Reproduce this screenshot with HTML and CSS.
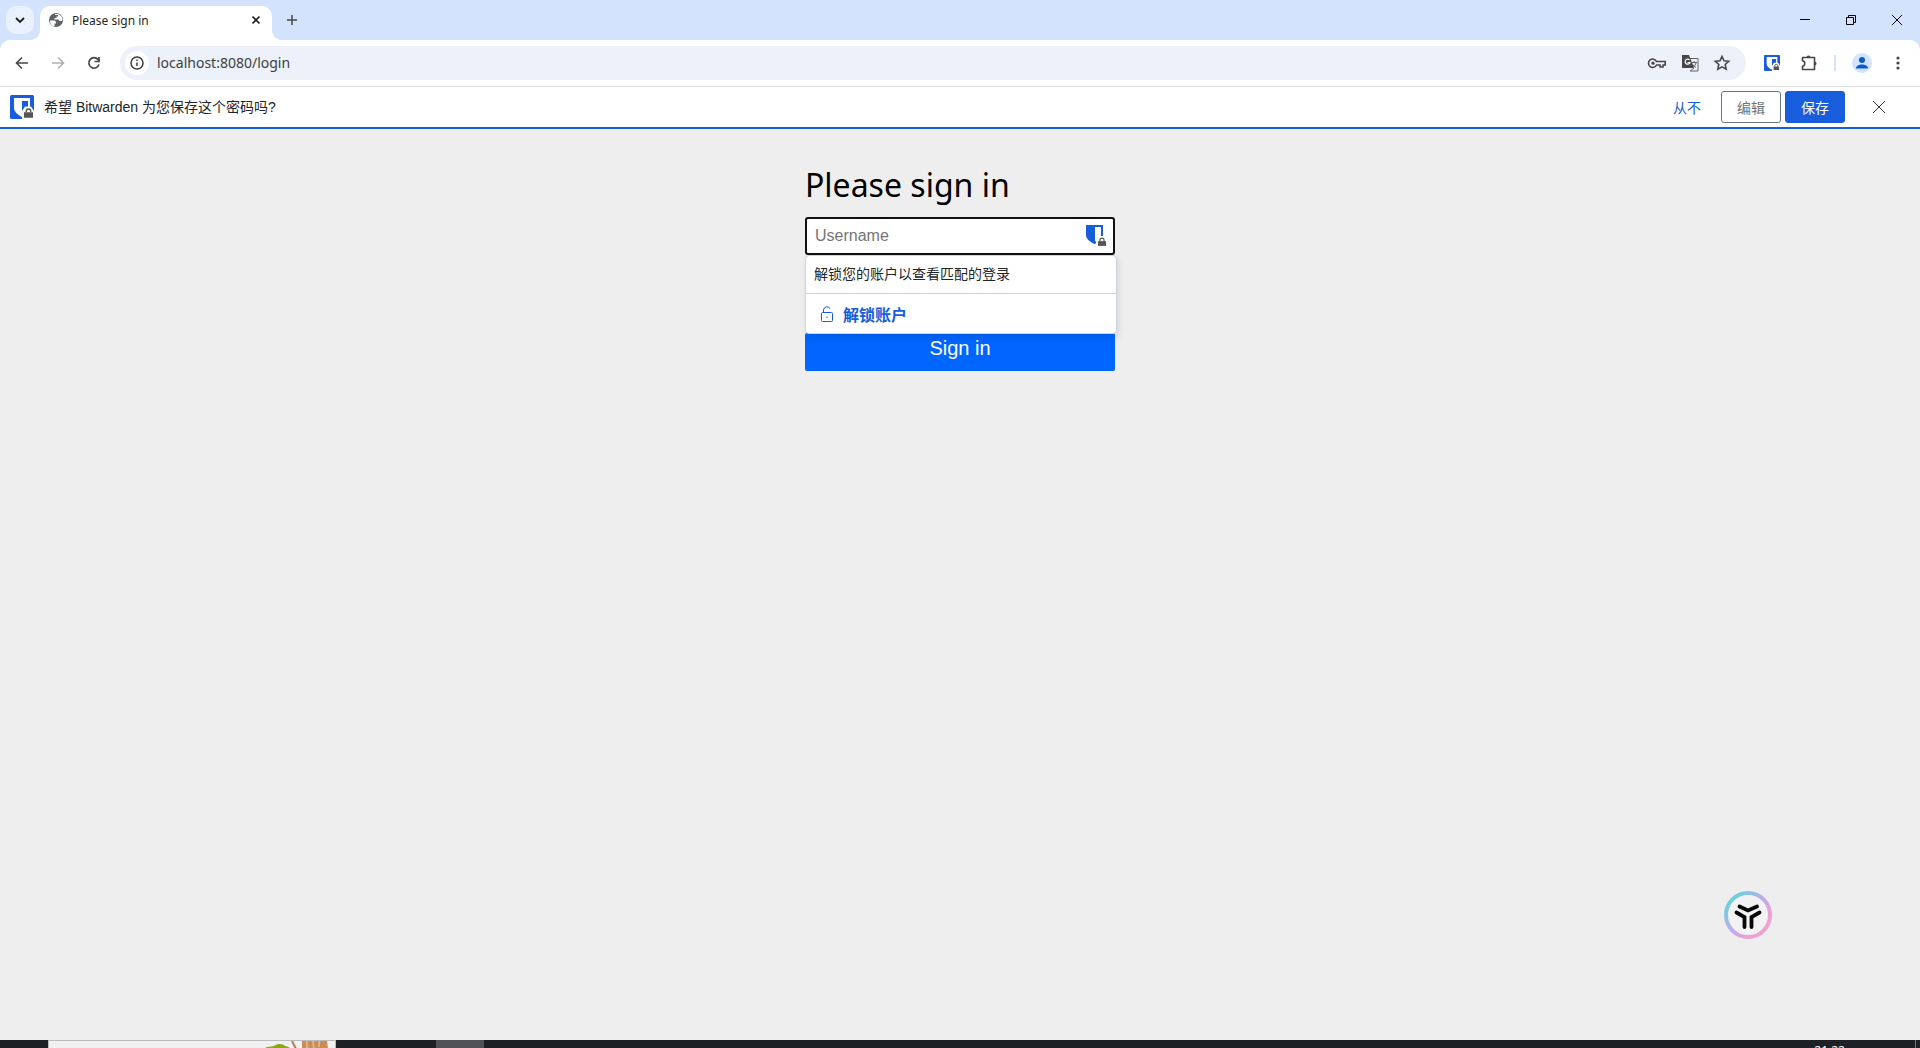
FILE: index.html
```html
<!DOCTYPE html>
<html lang="zh-CN">
<head>
<meta charset="utf-8">
<title>Please sign in</title>
<link rel="stylesheet" href="styles.css">
</head>
<body>
<svg class="defs" aria-hidden="true">
  <symbol id="lock" viewBox="0 0 10 11"><path d="M2.500 5V3.800a2.500 2.500 0 0 1 5 0V5" fill="none" stroke="#555" stroke-width="1.500"/><path d="M0 5h10v6H0z" fill="#555"/></symbol>
  <symbol id="bitwarden" viewBox="0 0 24 24"><rect width="24" height="24" rx="1.500" fill="#175ddc"/><path d="M4 3h16v10c0 4-4 7-8 9-4-2-8-5-8-9z" fill="#fff"/><path d="M12 6h6v7c0 2-3 4-6 6z" fill="#175ddc"/><path d="M12 24v-8l3-4.500h6l3 4.500v8z" fill="#fff"/><use href="#lock" x="14" y="12.500" width="9" height="10.500"/></symbol>
</svg>
<header class="titlebar">
  <button class="tab-search" aria-label="Search tabs"><svg width="28" height="28" fill="none" stroke="#1f1f1f" stroke-width="1.800"><path d="m10 12 4 4 4-4"/></svg></button>
  <div class="tab">
    <svg width="16" height="16" viewBox="0 0 16 16"><circle cx="8" cy="8" r="7" fill="#5f6368"/><path d="M2 8.500h4c2 0 2 2 2 3H6.500v3A6 6 0 0 1 2 8.500M7 3h3v1.500H8.500V6H6.500v1.500h4l1 1.500H14l.4-1A6.400 6.400 0 0 0 10 2H7z" fill="#fff"/></svg>
    <span class="tab-title">Please sign in</span>
    <button class="plain" aria-label="Close tab"><svg width="16" height="16" fill="none" stroke="#1f1f1f" stroke-width="1.600"><path d="m4.500 4.500 7 7m0-7-7 7"/></svg></button>
  </div>
  <button class="plain new-tab" aria-label="New tab"><svg width="16" height="16" fill="none" stroke="#474747" stroke-width="1.500"><path d="M8 3v10M3 8h10"/></svg></button>
  <div class="window-controls">
    <button class="plain" aria-label="Minimize"><svg width="12" height="12" fill="none" stroke="#000"><path d="M1 5.500h10"/></svg></button>
    <button class="plain" aria-label="Restore"><svg width="12" height="12" fill="none" stroke="#000"><path d="M1.500 3.500h7v7h-7zM3.500 3.500v-2h7v7h-2"/></svg></button>
    <button class="plain" aria-label="Close"><svg width="12" height="12" fill="none" stroke="#000"><path d="m1 1 10 10M11 1 1 11"/></svg></button>
  </div>
</header>
<nav class="toolbar">
  <button class="plain nav-button" aria-label="Back"><svg width="16" height="16" fill="none" stroke="#474747" stroke-width="1.600"><path d="M14 8H3m5-5.500L2.500 8 8 13.500"/></svg></button>
  <button class="plain nav-button" aria-label="Forward" disabled><svg width="16" height="16" fill="none" stroke="#b0b0b0" stroke-width="1.600"><path d="M2 8h11M8 2.500 13.500 8 8 13.500"/></svg></button>
  <button class="plain nav-button" aria-label="Reload"><svg width="16" height="16" fill="none" stroke="#474747" stroke-width="1.700"><path d="M13 9.500A5.200 5.200 0 1 1 12 4.500L13 6"/><path d="M13 2v4.500H8.500"/></svg></button>
  <div class="omnibox">
    <button class="site-info" aria-label="Site information"><svg width="16" height="16" fill="none" stroke="#3c3c3c" stroke-width="1.500"><circle cx="8" cy="8" r="6"/><path d="M8 7.500V11M8 4.500V6"/></svg></button>
    <input class="address" aria-label="Address" value="localhost:8080/login">
    <button class="plain" aria-label="Passwords"><svg width="20" height="16" fill="none" stroke="#474747" stroke-width="1.600"><path d="M9.500 6.500a4.200 4.200 0 1 0 0 3.500H13v2h3v-2h2.200V6.500z"/><circle cx="6" cy="8.200" r="1.600" fill="#474747" stroke="none"/></svg></button>
    <button class="plain" aria-label="Translate"><svg width="18" height="18"><path d="M6.500 4.500H17v12.500H9" fill="none" stroke="#5f6368"/><path d="M1 1h7l5 13H1z" fill="#474747"/><path d="M8.500 6A2.500 2.500 0 1 0 9 8.500H6.500" fill="none" stroke="#fff" stroke-width="1.200"/><path d="M10 8.500h6m-3-1.500v1.500m2 0c0 2-2 4-3 5m-1-4c1 2 3 3.500 4 4M9 17l4-3" fill="none" stroke="#5f6368"/></svg></button>
    <button class="plain" aria-label="Bookmark"><svg width="18" height="18" fill="none" stroke="#474747" stroke-width="1.600"><path d="m9 2.500 2 4.300 4.700.5-3.500 3.200 1 4.700L9 12.800l-4.200 2.400 1-4.700-3.500-3.200L7 6.800z"/></svg></button>
  </div>
  <button class="plain extension" aria-label="Bitwarden"><svg width="16" height="16"><use href="#bitwarden"/></svg></button>
  <button class="plain extension" aria-label="Extensions"><svg width="18" height="18" fill="none" stroke="#474747" stroke-width="1.600"><path d="M2.500 3.500h12v12h-12v-3.200c3-.3 3-5.200 0-5.500z" stroke-linejoin="round"/><path d="M6.500 3.500a2 2 0 0 1 4 0zM14.500 7.500a2 2 0 0 1 0 4z" fill="#474747" stroke="none"/></svg></button>
  <span class="divider"></span>
  <button class="profile" aria-label="Profile"><svg width="20" height="20" fill="#0b57d0"><circle cx="10" cy="7" r="3"/><path d="M4 15.500c0-5.300 12-5.300 12 0z"/></svg></button>
  <button class="plain menu" aria-label="Menu"><svg width="16" height="16" fill="#474747"><circle cx="8" cy="3" r="1.600"/><circle cx="8" cy="8" r="1.600"/><circle cx="8" cy="13" r="1.600"/></svg></button>
</nav>
<section class="notice">
  <svg width="24" height="24"><use href="#bitwarden"/></svg>
  <span class="notice-text">希望 Bitwarden 为您保存这个密码吗?</span>
  <button class="never">从不</button>
  <button class="action edit">编辑</button>
  <button class="action save">保存</button>
  <button class="plain dismiss" aria-label="Close"><svg width="14" height="14" fill="none" stroke="#333"><path d="m1 1 12 12M13 1 1 13"/></svg></button>
</section>
<main class="page">
  <form class="signin">
    <h1>Please sign in</h1>
    <div class="field">
      <input class="username" type="text" placeholder="Username" aria-label="Username">
      <svg class="field-icon" width="20" height="22"><path d="M0 0h17v10c0 4-4 7-8.500 9C4 17 0 14 0 10z" fill="#175ddc"/><path d="M9 2h6v8c0 3-3 5-6 6.500z" fill="#fff"/><path d="M10 22v-7l3-4h5l3 4v7z" fill="#fff"/><use href="#lock" x="12" y="12" width="8" height="9"/></svg>
      <div class="autofill">
        <p>解锁您的账户以查看匹配的登录</p>
        <button type="button"><svg width="14" height="18" fill="none" stroke="#175ddc"><rect x="1.500" y="7.500" width="11" height="9" rx="1"/><path d="M3.500 7.500V5a3.500 3.500 0 0 1 6.500-1.500M7 11.500v1.500"/></svg>解锁账户</button>
      </div>
    </div>
    <button class="submit">Sign in</button>
  </form>
  <button class="assistant" aria-label="Assistant"><svg width="48" height="48" viewBox="0 0 48 48" fill="none"><defs><linearGradient id="ring" x1="0" y1="0" x2="1" y2="1"><stop offset=".15" stop-color="#70cfdf"/><stop offset=".5" stop-color="#c3a9ed"/><stop offset=".75" stop-color="#f0a0d3"/></linearGradient></defs><circle cx="24" cy="24" r="22" fill="#f2f2f2" stroke="url(#ring)" stroke-width="4"/><path d="m15.500 15.500 8.500 4 9-4M12.500 21.500l8 4.500v10M35.500 21.500l-8 4.500v10" stroke="#080808" stroke-width="3.800" stroke-linecap="round"/></svg></button>
</main>
<footer class="taskbar">
  <div class="search"><svg width="66" height="8"><path d="M0 8c2-3 7-2 10-3 4-3 9-2 11 0 3 0 4 2 7 3z" fill="#8da51b"/><path d="m28 0 4 8" stroke="#b77d52" stroke-width="2"/><path d="M38 0h25l1 8H38z" fill="#c88d58"/><path d="M43 0v8m6-8 1 8m5-8v6" stroke="#e0b282" stroke-width="2"/></svg></div>
  <div class="running"></div>
  <time>21:22</time>
  <div class="desktop-edge"></div>
</footer>
</body>
</html>
```

FILE: styles.css
```css
* { box-sizing: border-box; }
body {
  margin: 0;
  min-height: 100vh;
  display: flex;
  flex-direction: column;
  background: #d3e3fd;
  font-family: "Noto Sans", "Noto Sans CJK SC", sans-serif;
}
button, input { font: inherit; margin: 0; }
svg { display: block; flex: none; }
.defs { width: 0; height: 0; position: absolute; }
.plain { display: grid; place-items: center; padding: 0; border: 0; background: none; }

.titlebar { display: flex; align-items: center; height: 40px; padding-left: 6px; }
.tab-search { width: 28px; height: 28px; padding: 0; border: 0; border-radius: 10px; background: #e9f0fe; }
.tab {
  position: relative;
  display: flex;
  align-items: center;
  gap: 8px;
  align-self: flex-end;
  width: 232px;
  height: 34px;
  margin-left: 6px;
  padding: 0 8px 6px;
  border-radius: 10px 10px 0 0;
  background: #fff;
}
.tab::before, .tab::after { content: ""; position: absolute; bottom: 0; width: 10px; height: 10px; }
.tab::before { right: 100%; background: radial-gradient(circle at 0 0, transparent 10px, #fff 10px); }
.tab::after { left: 100%; background: radial-gradient(circle at 100% 0, transparent 10px, #fff 10px); }
.tab-title { flex: 1; font-size: 12px; color: #1f1f1f; }
.new-tab { margin-left: 12px; }
.window-controls { display: flex; margin-left: auto; }
.window-controls button { width: 46px; height: 40px; }

.toolbar {
  display: flex;
  align-items: center;
  height: 47px;
  padding: 0 4px;
  border-bottom: 1px solid #dcdddf;
  border-radius: 10px 10px 0 0;
  background: #fff;
}
.nav-button { width: 36px; height: 34px; }
.omnibox {
  flex: 1;
  display: flex;
  align-items: center;
  gap: 14px;
  height: 34px;
  margin: 0 12px 0 8px;
  padding: 0 15px 0 5px;
  border-radius: 17px;
  background: #ecf1fa;
}
.site-info { display: grid; place-items: center; width: 24px; height: 24px; padding: 0; border: 0; border-radius: 50%; background: #fff; }
.address { flex: 1; padding: 0 0 2px; margin-left: -6px; border: 0; outline: 0; background: none; font-size: 14px; color: #3c3f43; }
.extension { width: 28px; height: 28px; margin-right: 9px; }
.divider { width: 2px; height: 16px; margin: 0 16px 0 2px; background: #d3e3fd; }
.profile { width: 20px; height: 20px; padding: 0; border: 0; border-radius: 50%; background: #d3e3fd; }
.menu { width: 36px; height: 28px; margin-left: 8px; }

.notice {
  display: flex;
  align-items: center;
  height: 42px;
  padding: 0 31px 0 10px;
  border-bottom: 2px solid #175ddc;
  background: #fff;
  font: 14px "Liberation Sans", "Noto Sans CJK SC", sans-serif;
  color: #212529;
}
.notice-text { flex: 1; margin-left: 10px; padding-bottom: 2px; }
.never { padding: 0; margin-right: 20px; border: 0; background: none; color: #175ddc; }
.action { width: 60px; height: 32px; padding: 0; border: 1px solid #6c757d; border-radius: 3px; background: #fff; color: #6c757d; }
.save { margin-left: 4px; border-color: #175ddc; background: #175ddc; color: #fff; }
.dismiss { width: 20px; height: 20px; margin-left: 24px; }

.page { flex: 1; position: relative; background: #eee; }
.signin { width: 310px; margin: 0 auto; padding-top: 32px; }
h1 { margin: 0 0 8px; font-size: 32px; line-height: 48px; font-weight: 400; color: #000; }
.field { position: relative; margin-bottom: 78px; font-family: "Liberation Sans", "Noto Sans CJK SC", sans-serif; }
.username { display: block; width: 100%; height: 38px; padding: 0 8px; border: 2px solid #101010; border-radius: 3px; outline: 0; background: #fff; font-size: 16px; }
.username::placeholder { color: #757575; }
.field-icon { position: absolute; top: 8px; right: 9px; }
.autofill { position: absolute; top: 100%; left: 0; width: 312px; border: 1px solid #ced4dc; border-radius: 4px; background: #fff; box-shadow: 2px 4px 6px #0000001a; color: #212529; }
.autofill p { margin: 0; padding: 0 8px; font-size: 14px; line-height: 37px; border-bottom: 1px solid #ced4dc; }
.autofill button { display: flex; align-items: center; gap: 9px; width: 100%; height: 39px; padding: 0 14px; border: 0; background: none; font-size: 16px; font-weight: 700; color: #175ddc; }
.submit { display: block; width: 100%; height: 38px; padding: 0 0 8px; border: 0; border-radius: 2px; background: #06f; color: #fff; font: 20px "Liberation Sans", sans-serif; }
.assistant { position: absolute; right: 148px; bottom: 101px; padding: 0; border: 0; border-radius: 50%; background: none; }

.taskbar { display: flex; height: 8px; padding-left: 48px; overflow: hidden; background: #1d2125; }
.search { display: flex; justify-content: flex-end; width: 288px; padding-right: 5px; border: 1px solid #bbb; border-bottom: 0; background: #f1f1f1; }
.running { width: 48px; margin-left: 100px; background: #505256; }
time { margin: 3px 70px 0 auto; font-size: 12px; line-height: 16px; color: #fff; }
.desktop-edge { width: 5px; border-left: 1px solid #777; }
```
